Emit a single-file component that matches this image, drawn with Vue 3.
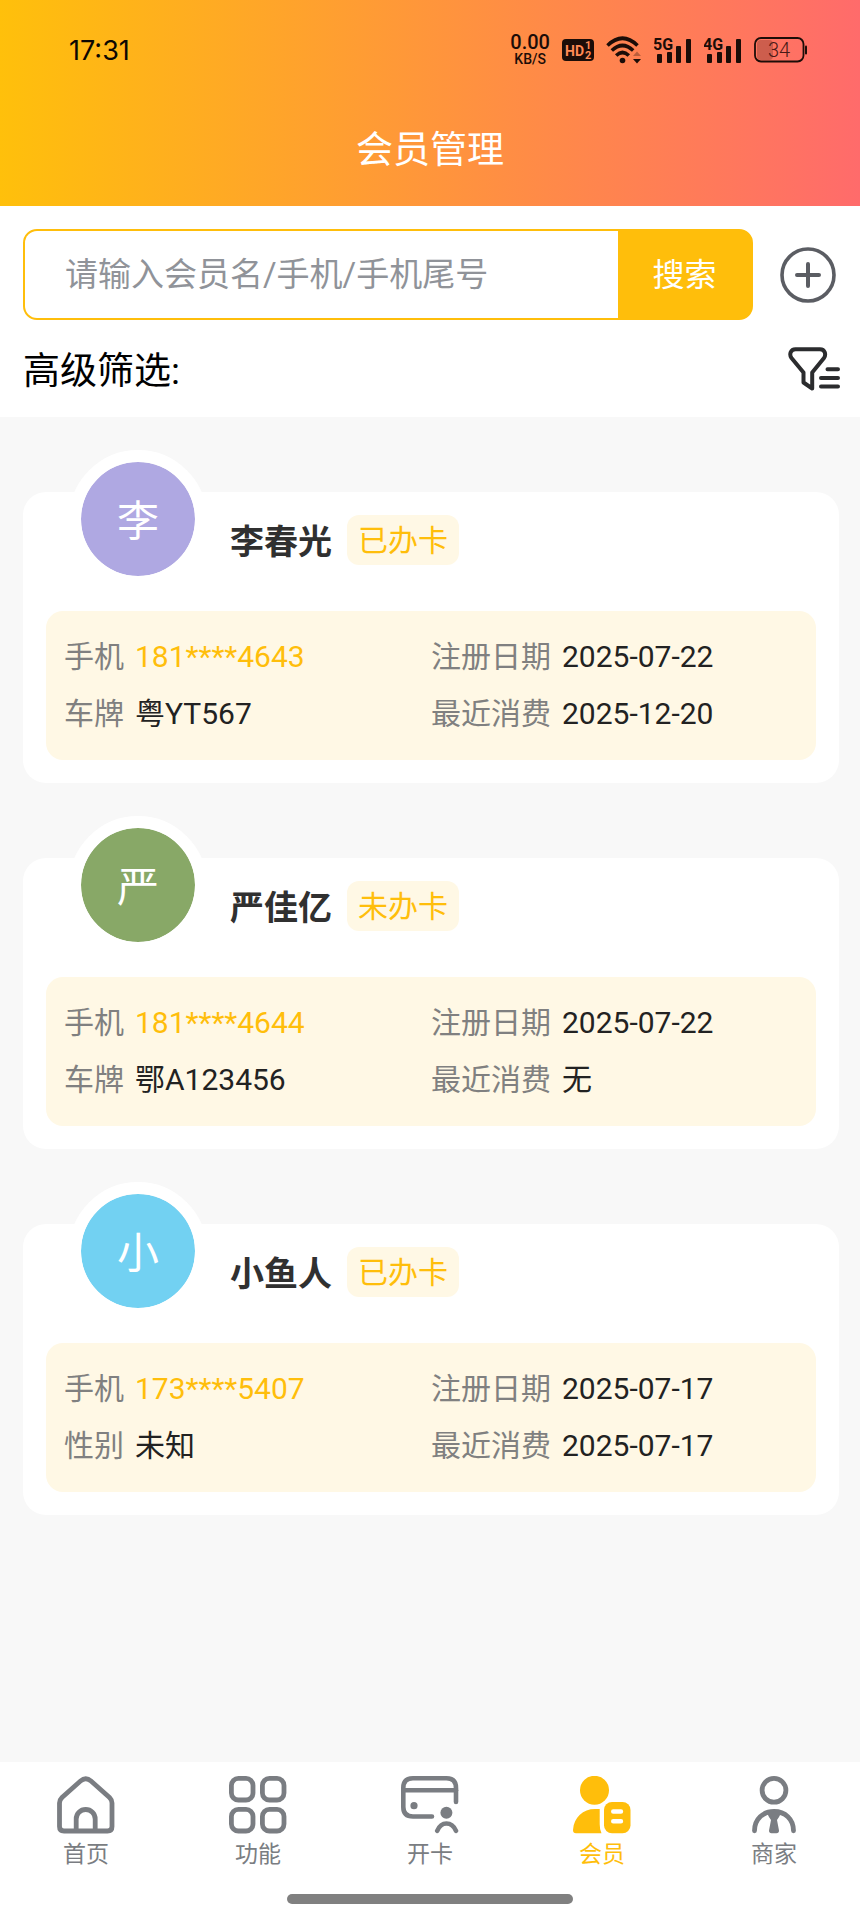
<script setup>
import { ref } from 'vue'

const keyword = ref('')

const members = [
  {
    name: '李春光',
    tone: 'violet',
    status: '已办卡',
    fields: [
      { label: '手机', value: '181****4643', accent: true },
      { label: '注册日期', value: '2025-07-22' },
      { label: '车牌', value: '粤YT567' },
      { label: '最近消费', value: '2025-12-20' },
    ],
  },
  {
    name: '严佳亿',
    tone: 'green',
    status: '未办卡',
    fields: [
      { label: '手机', value: '181****4644', accent: true },
      { label: '注册日期', value: '2025-07-22' },
      { label: '车牌', value: '鄂A123456' },
      { label: '最近消费', value: '无' },
    ],
  },
  {
    name: '小鱼人',
    tone: 'blue',
    status: '已办卡',
    fields: [
      { label: '手机', value: '173****5407', accent: true },
      { label: '注册日期', value: '2025-07-17' },
      { label: '性别', value: '未知' },
      { label: '最近消费', value: '2025-07-17' },
    ],
  },
]
</script>

<template>
  <div class="app">
    <header class="header">
      <div class="status">
        <span class="clock">17:31</span>
        <div class="indicators">
          <div class="speed">
            <span class="rate">0.00</span>
            <span class="unit">KB/S</span>
          </div>
          <svg width="32" height="26" viewBox="0 0 32 26" aria-hidden="true">
            <rect x="0" y="2" width="32" height="22" rx="4" fill="#1c0d08" />
            <text x="3" y="19" class="hd">HD</text>
            <text x="23" y="12" class="sim">1</text>
            <text x="23" y="22" class="sim">2</text>
          </svg>
          <svg width="36" height="28" viewBox="0 0 36 28" aria-hidden="true">
            <g fill="none" stroke="#1c0d08" stroke-width="3.6">
              <path d="M1.500 9.500Q16.500 -5 31.500 9.500" />
              <path d="M5.800 14.500Q16.500 4.500 27.200 14.500" />
              <path d="M10.200 19.500Q16.500 13.500 22.800 19.500" />
            </g>
            <circle cx="16.500" cy="24.500" r="2.800" fill="#1c0d08" />
            <path d="M27 20l4-4.500 4 4.500z" fill="#1c0d08" opacity="0.3" />
            <path d="M27 23h8l-4 4.500z" fill="#1c0d08" />
          </svg>
          <svg v-for="net in ['5G', '4G']" :key="net" width="38" height="28" viewBox="0 0 38 28" aria-hidden="true">
            <text x="-1" y="14" class="net">{{ net }}</text>
            <g fill="#1c0d08">
              <rect x="3" y="18" width="5" height="9" rx="1" />
              <rect x="13" y="16" width="5" height="11" rx="1" />
              <rect x="22" y="10" width="5" height="17" rx="1" />
              <rect x="32" y="3" width="5" height="24" rx="1" />
            </g>
          </svg>
          <svg width="53" height="26" viewBox="0 0 53 26" aria-hidden="true">
            <rect x="3" y="3" width="16" height="20" rx="4" fill="#1c0d08" opacity="0.22" />
            <rect x="1" y="1" width="48.500" height="23.500" rx="6" fill="none" stroke="#1c0d08" stroke-width="1.800" />
            <rect x="51" y="8.500" width="2" height="9" rx="1" fill="#1c0d08" />
            <text x="25" y="20" class="charge">34</text>
          </svg>
        </div>
      </div>
      <h1 class="title">会员管理</h1>
    </header>

    <section class="tools">
      <div class="search-row">
        <form class="search" @submit.prevent>
          <input v-model="keyword" class="search-input" type="text" aria-label="搜索会员" placeholder="请输入会员名/手机/手机尾号" />
          <button class="search-button" type="submit">搜索</button>
        </form>
        <button class="icon-button" type="button" aria-label="新增会员">
          <svg width="56" height="56" viewBox="0 0 56 56" fill="none" stroke="#5b5d63">
            <circle cx="28" cy="28" r="26" stroke-width="3.600" />
            <path d="M28 17v22M17 28h22" stroke-width="4" stroke-linecap="round" />
          </svg>
        </button>
      </div>
      <div class="filter-row">
        <span>高级筛选:</span>
        <button class="icon-button" type="button" aria-label="高级筛选">
          <svg width="52" height="44" viewBox="0 0 52 44" fill="none" stroke="#2b2c2e" stroke-width="4" stroke-linecap="round" stroke-linejoin="round">
            <path d="M7.500 2.300H32C37 2.300 38.300 7.500 36 11L24.200 25.500V41.500L15.500 35.500V25.500L3.500 11C1 7.500 2.500 2.300 7.500 2.300Z" />
            <path d="M39.500 22.300H50M33 31H50M33 39.500H50" />
          </svg>
        </button>
      </div>
    </section>

    <main class="list">
      <article v-for="m in members" :key="m.name" class="card">
        <div class="card-head">
          <div class="avatar" :class="m.tone">{{ m.name[0] }}</div>
          <h2 class="name">{{ m.name }}</h2>
          <span class="badge">{{ m.status }}</span>
        </div>
        <dl class="info">
          <div v-for="f in m.fields" :key="f.label" class="field">
            <dt>{{ f.label }}</dt>
            <dd :class="{ accent: f.accent }">{{ f.value }}</dd>
          </div>
        </dl>
      </article>
    </main>

    <nav class="tabbar">
      <div class="tabs">
        <a class="tab" href="#home">
          <svg class="tab-icon" viewBox="0 0 58 58" fill="none" stroke="currentColor" stroke-width="4.800">
            <path d="M7 55H50.500Q55 55 55 50.500V27Q55 24 52.500 21.500L34 5Q28.750 0.500 23.500 5L5 21.500Q2.500 24 2.500 27V50.500Q2.500 55 7 55Z" />
            <path d="M19.200 55V43a9.500 9.500 0 0 1 19 0V55" />
          </svg>
          <span>首页</span>
        </a>
        <a class="tab" href="#features">
          <svg class="tab-icon" viewBox="0 0 58 58" fill="none" stroke="currentColor" stroke-width="4.800">
            <rect x="2.400" y="2.400" width="21.600" height="21.600" rx="7" />
            <rect x="33.400" y="2.400" width="21.600" height="21.600" rx="7" />
            <rect x="2.400" y="33.400" width="21.600" height="21.600" rx="7" />
            <rect x="33.400" y="33.400" width="21.600" height="21.600" rx="7" />
          </svg>
          <span>功能</span>
        </a>
        <a class="tab" href="#cards">
          <svg class="tab-icon" viewBox="0 0 58 58" fill="none" stroke="currentColor" stroke-width="4.600" stroke-linecap="round">
            <path d="M31 40.500H12Q2.300 40.500 2.300 31V12Q2.300 2.300 12 2.300H45.500Q55 2.300 55 12V26" />
            <path d="M2.300 14.200H55" />
            <circle cx="13" cy="29.700" r="3.600" fill="currentColor" stroke="none" />
            <circle cx="45.400" cy="36.700" r="6" fill="currentColor" stroke="none" />
            <path d="M36.200 54.800C38.500 49.500 41.500 47.500 45.400 47.500S52.700 49.500 55 54.800" />
          </svg>
          <span>开卡</span>
        </a>
        <a class="tab active" href="#members" aria-current="page">
          <svg class="tab-icon" viewBox="0 0 58 58" fill="currentColor">
            <circle cx="21.500" cy="14.300" r="14.500" />
            <path d="M26.700 33V48Q26.700 54 28.500 57.300H3Q0 57.300 0 54C1 41 10 33 22 33Z" />
            <rect x="31" y="26" width="26.500" height="31.300" rx="8" />
            <path d="M40.200 35.500H48M40.200 45.300H48" stroke="#fff" stroke-width="4.400" stroke-linecap="round" />
          </svg>
          <span>会员</span>
        </a>
        <a class="tab" href="#merchant">
          <svg class="tab-icon" viewBox="0 0 58 58" fill="none" stroke="currentColor" stroke-width="4.800" stroke-linecap="round">
            <circle cx="29" cy="14.300" r="11.900" />
            <path d="M9.500 54.800C9.500 43 18 35.500 29 35.500S48.500 43 48.500 54.800" />
            <path d="M22 37H36Q34.500 40.500 32 44L34 54.500Q34 57.300 31.500 57.300H26.500Q24 57.300 24 54.500L26 44Q23.500 40.500 22 37Z" fill="currentColor" stroke="none" />
          </svg>
          <span>商家</span>
        </a>
      </div>
      <div class="home-bar"></div>
    </nav>
  </div>
</template>

<style>
html,
body {
  margin: 0;
  background: #f8f8f8;
}
</style>

<style scoped>
.app {
  min-height: 100vh;
  display: flex;
  flex-direction: column;
  background: #f8f8f8;
  color: #000;
  font-family: Roboto, "Noto Sans CJK SC", sans-serif;
  font-size: 30px;
}

button {
  border: 0;
  padding: 0;
  background: none;
  font: inherit;
  color: inherit;
  cursor: pointer;
}

svg {
  display: block;
}

.header {
  padding-bottom: 4px;
  background: linear-gradient(90deg, #ffc00b, #ff6b6b);
}

.status {
  height: 100px;
  padding: 0 53px 0 69px;
  display: flex;
  align-items: center;
  justify-content: space-between;
}

.clock {
  font-family: Inter, sans-serif;
  font-size: 27px;
  color: #0c0802;
}

.indicators {
  display: flex;
  align-items: center;
  gap: 12px;
}

.speed {
  display: flex;
  flex-direction: column;
  align-items: center;
  font-weight: 500;
  color: #1c0d08;
}

.rate {
  font-size: 20px;
  line-height: 18px;
}

.unit {
  font-size: 14px;
  line-height: 16px;
}

.hd {
  font: bold 14px Roboto, sans-serif;
  fill: #ff8a55;
}

.sim {
  font: bold 11px Roboto, sans-serif;
  fill: #ff8a55;
}

.net {
  font: bold 16px Roboto, sans-serif;
  fill: #1c0d08;
}

.charge {
  font: 300 20px Roboto, sans-serif;
  text-anchor: middle;
  fill: #4a1a16;
}

.title {
  margin: 0;
  font-size: 37px;
  font-weight: 400;
  line-height: 102px;
  text-align: center;
  color: #fff;
}

.tools {
  padding: 23px 20px 20px 23px;
  background: #fff;
}

.search-row,
.filter-row {
  display: flex;
  align-items: center;
  justify-content: space-between;
}

.search-row {
  gap: 27px;
  padding-right: 4px;
}

.search {
  flex: 1;
  min-width: 0;
  height: 91px;
  box-sizing: border-box;
  display: flex;
  border: 2px solid #ffbe0b;
  border-radius: 14px;
  background: #ffbe0b;
}

.search-input {
  flex: 1;
  min-width: 0;
  border: 0;
  padding: 0 40px;
  border-radius: 12px 0 0 12px;
  background: #fff;
  font: inherit;
  font-size: 33px;
  color: #303133;
  outline: none;
}

.search-input::placeholder {
  color: #909399;
  opacity: 1;
}

.search-button {
  width: 133px;
  padding-bottom: 5px;
  font-size: 32px;
  color: #fff;
}

.filter-row {
  height: 50px;
  margin-top: 27px;
  align-items: flex-start;
  font-size: 37px;
  line-height: 50px;
}

.list {
  flex: 1;
  padding: 75px 21px 75px 23px;
  display: flex;
  flex-direction: column;
  gap: 75px;
}

.card {
  padding: 0 23px 23px;
  border-radius: 23px;
  background: #fff;
}

.card-head {
  height: 119px;
  padding-left: 23px;
  display: flex;
  align-items: flex-start;
}

.avatar {
  width: 114px;
  height: 114px;
  margin-top: -42px;
  border: 12px solid #fff;
  border-radius: 50%;
  font-size: 42px;
  line-height: 120px;
  text-align: center;
  color: #fff;
}

.violet {
  background: #afa8e2;
  background-clip: padding-box;
}

.green {
  background: #88a867;
  background-clip: padding-box;
}

.blue {
  background: #72d1f2;
  background-clip: padding-box;
}

.name {
  margin: 23px 15px 0 23px;
  font-size: 34px;
  line-height: 54px;
  color: #303030;
}

.badge {
  height: 50px;
  margin-top: 23px;
  padding: 0 11px;
  border-radius: 12px;
  background: #fff8e5;
  line-height: 52px;
  color: #ffbe0b;
}

.info {
  margin: 0;
  padding: 17px 18px 18px;
  border-radius: 17px;
  background: #fff8e5;
  display: grid;
  grid-template-columns: 1fr 1fr;
  line-height: 57px;
}

.field {
  display: flex;
  gap: 11px;
}

.field dt {
  color: #808080;
}

.field dd {
  margin: 0;
  color: #222;
}

.field dd.accent {
  color: #ffbe0b;
}

.tabbar {
  position: sticky;
  bottom: 0;
  padding: 14px 0 16px;
  background: #fff;
}

.tabs {
  display: grid;
  grid-template-columns: repeat(5, 1fr);
}

.tab {
  display: flex;
  flex-direction: column;
  align-items: center;
  gap: 6px;
  font-size: 23px;
  line-height: 30px;
  color: #7a7d82;
  text-decoration: none;
}

.tab.active {
  color: #ffbe0b;
}

.tab-icon {
  width: 58px;
  height: 58px;
}

.home-bar {
  width: 33.3%;
  height: 10px;
  margin: 24px auto 0;
  border-radius: 5px;
  background: #808080;
}
</style>
